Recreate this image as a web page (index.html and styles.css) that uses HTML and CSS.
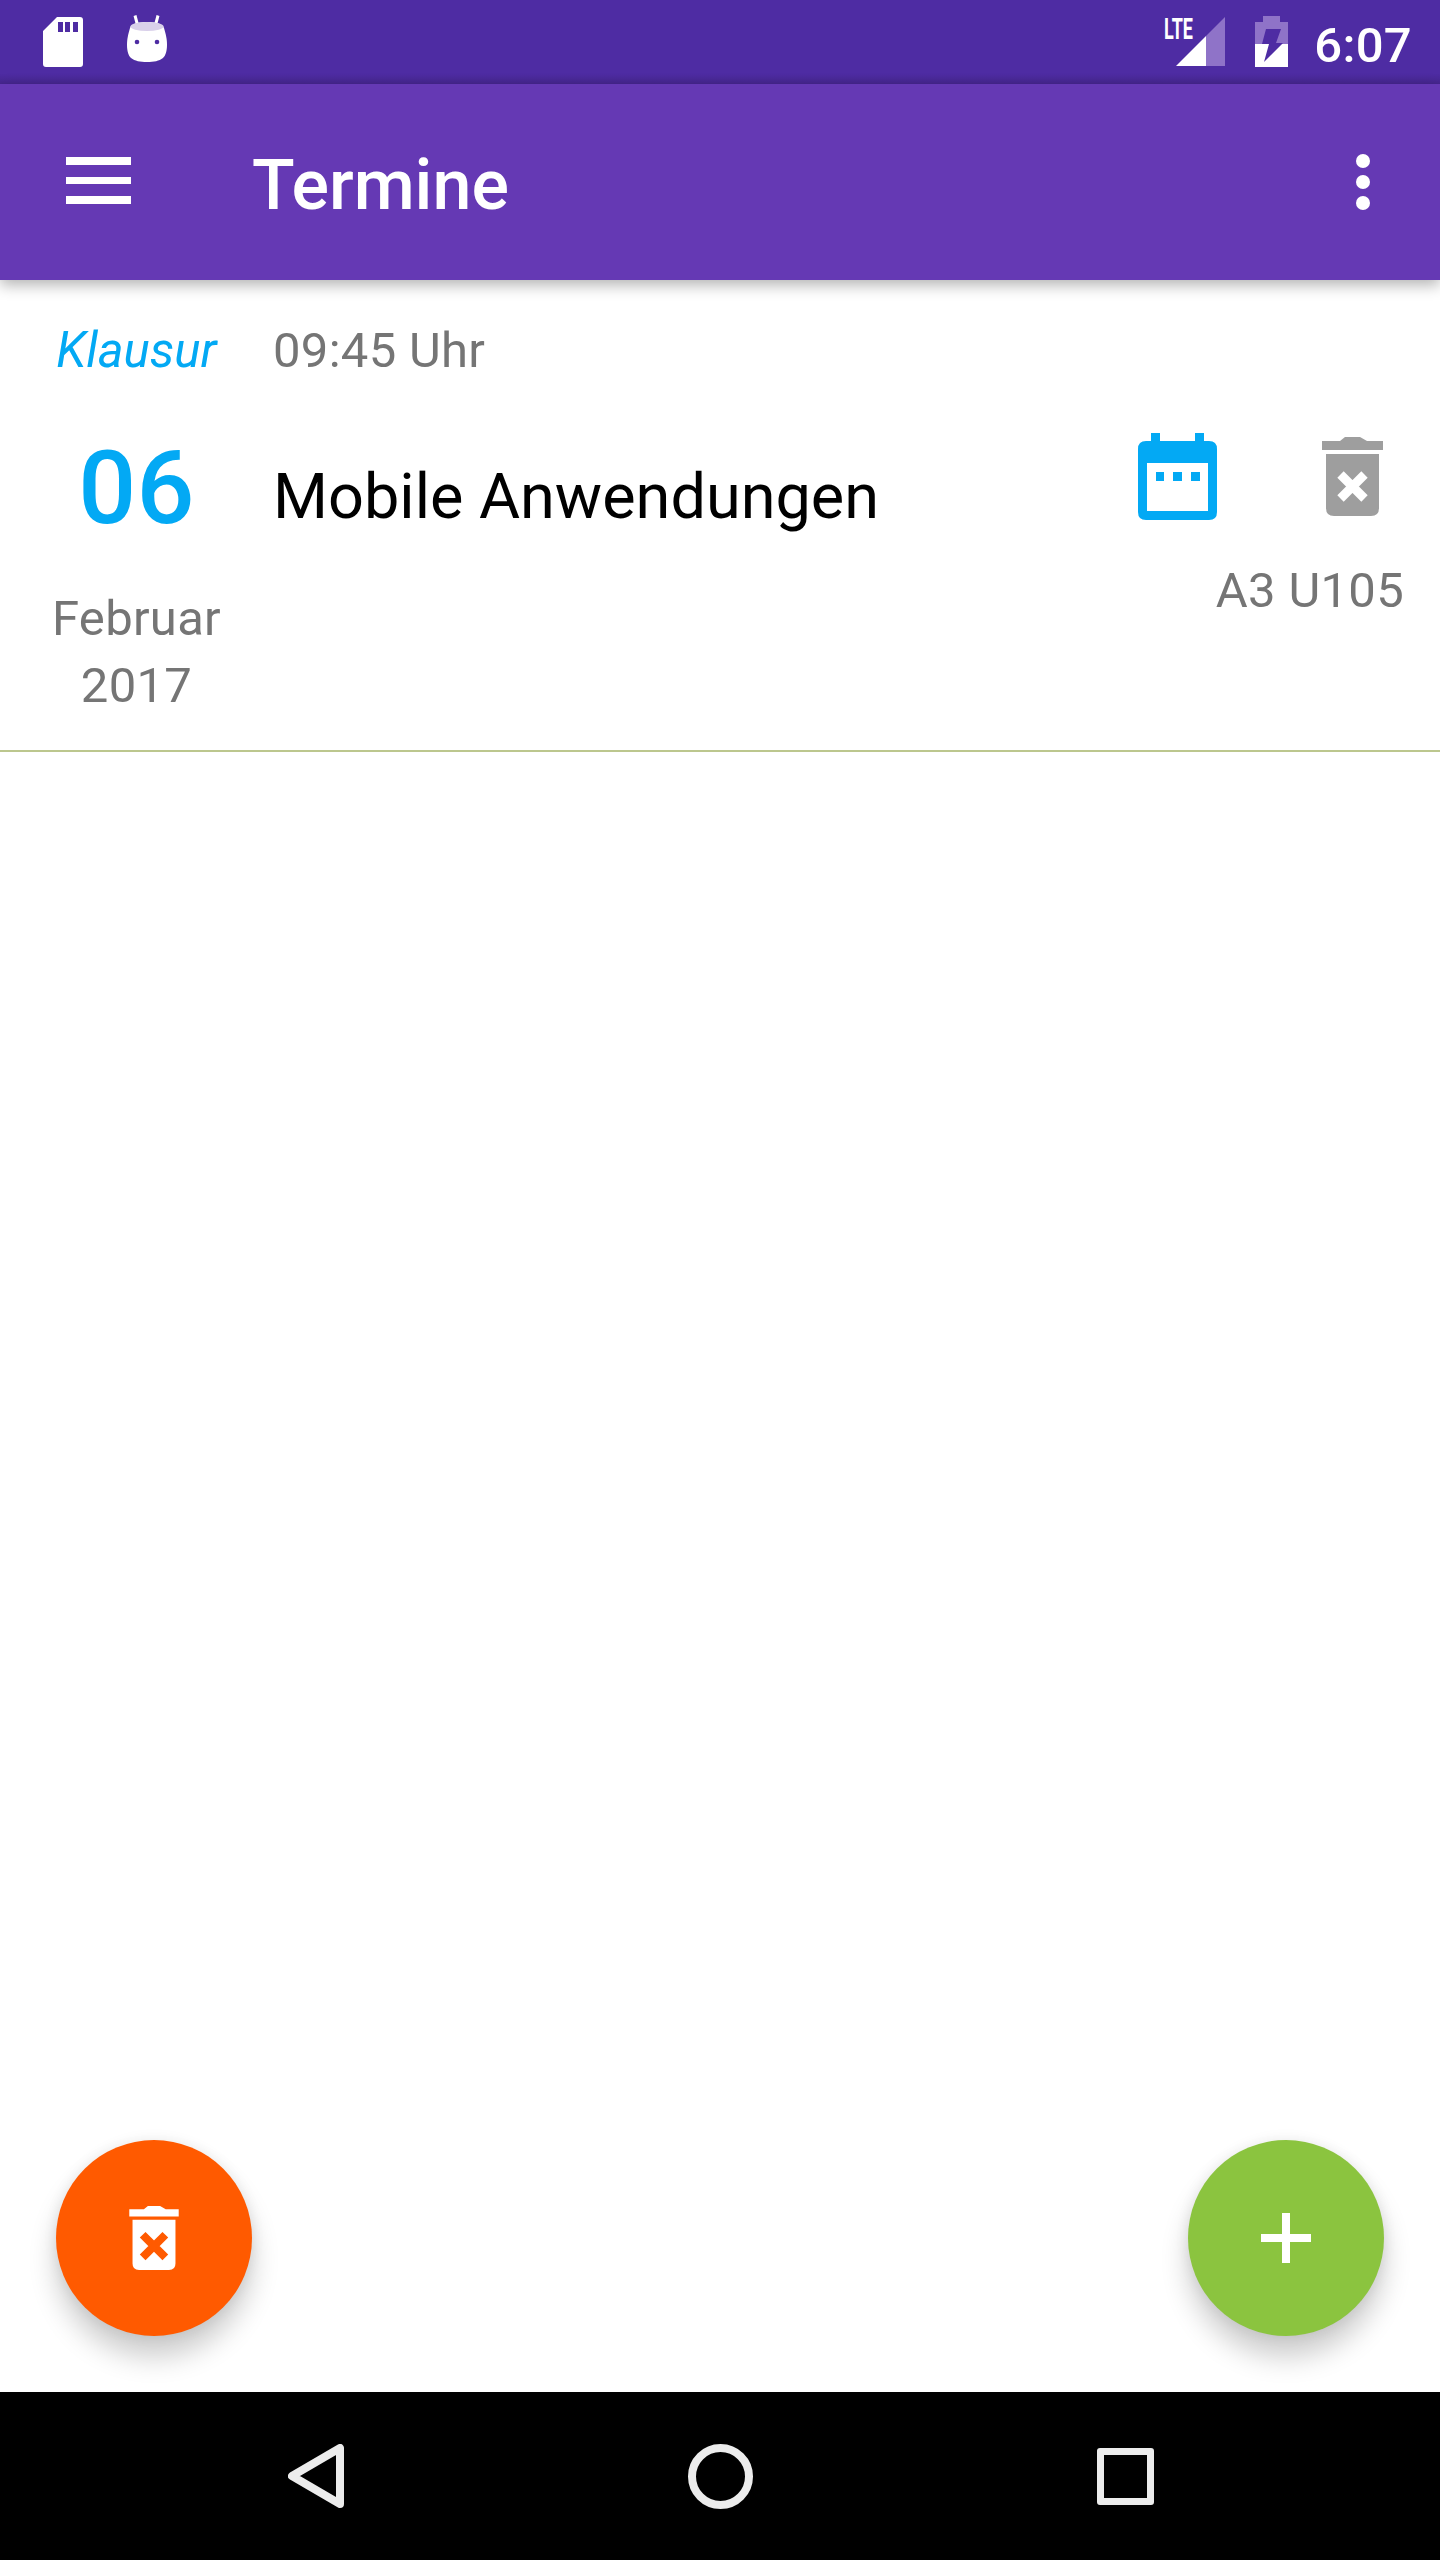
FILE: index.html
```html
<!DOCTYPE html>
<html lang="de">
<head>
    <meta charset="UTF-8">
    <meta name="viewport" content="width=device-width, initial-scale=1.0">
    <title>Termine</title>
    <link rel="stylesheet" href="styles.css">
</head>
<body>
    <div class="screen">
        <div class="statusbar">
            <svg class="sd-icon" width="40" height="50" viewBox="0 0 40 50">
                <path fill="#fff" fill-rule="evenodd" d="M14 0H37Q40 0 40 3V47Q40 50 37 50H3Q0 50 0 47V14ZM15 5V15H20V5ZM22 5V15H27V5ZM30 5V15H35V5Z"/>
            </svg>
            <svg class="android-icon" width="40" height="47" viewBox="0 0 40 47">
                <path d="M8 0.5L10.5 10M31 0.5L28.5 10" stroke="#fff" stroke-width="3" fill="none"/>
                <path fill="#fff" d="M20 7C29 7 36 9 37 13C39 20 40 24 40 30C40 36 38.5 41 36 43C32 46 27 47 20 47C13 47 8 46 4 43C1.5 41 0 36 0 30C0 24 1 20 3 13C4 9 11 7 20 7Z"/>
                <ellipse cx="20" cy="11.5" rx="16.5" ry="4.5" fill="#d9d0ea"/>
                <circle cx="10" cy="27" r="2.3" fill="#4e2ca3"/>
                <circle cx="30" cy="27" r="2.3" fill="#4e2ca3"/>
            </svg>
            <div class="status-right">
                <div class="signal">
                    <svg width="61" height="50" viewBox="0 0 61 50">
                        <polygon points="42,20 61,1 61,50 42,50" fill="#8f73c8"/>
                        <polygon points="12,50 42,20 42,50" fill="#fff"/>
                    </svg>
                    <span class="lte">LTE</span>
                </div>
                <svg class="battery-icon" width="33" height="51" viewBox="0 0 33 51">
                    <path fill="#8f73c8" d="M8 0H25V6H33V28H0V6H8Z"/>
                    <rect y="28" width="33" height="23" fill="#fff"/>
                    <polygon points="11,13 26,13 21,27 28,27 9,46 14,28 7,28" fill="#4e2ca3"/>
                </svg>
                <span class="clock">6:07</span>
            </div>
        </div>

        <div class="appbar">
            <svg class="menu-icon" width="65" height="47" viewBox="0 0 65 47">
                <rect width="65" height="8" fill="#fff"/>
                <rect y="20" width="65" height="7" fill="#fff"/>
                <rect y="39" width="65" height="8" fill="#fff"/>
            </svg>
            <p class="appbar-title">Termine</p>
            <svg class="more-icon" width="14" height="56" viewBox="0 0 14 56">
                <circle cx="7" cy="7" r="7" fill="#fff"/>
                <circle cx="7" cy="28" r="7" fill="#fff"/>
                <circle cx="7" cy="49" r="7" fill="#fff"/>
            </svg>
        </div>

        <div class="content">
            <div class="entry">
                <div class="entry-date">
                    <p class="entry-type">Klausur</p>
                    <p class="entry-day">06</p>
                    <p class="entry-month">Februar</p>
                    <p class="muted">2017</p>
                </div>
                <div class="entry-main">
                    <p class="muted">09:45 Uhr</p>
                    <p class="entry-name">Mobile Anwendungen</p>
                </div>
                <div class="entry-side">
                    <div class="entry-actions">
                        <svg width="79" height="87" viewBox="0 0 79 87">
                            <path fill="#03a9f4" fill-rule="evenodd" d="M13 0H22V8H57V0H66V8H71Q79 8 79 16V79Q79 87 71 87H8Q0 87 0 79V16Q0 8 8 8H13ZM9 30V78H70V30ZM18 39V48H26V39ZM35 39V48H44V39ZM53 39V48H62V39Z"/>
                        </svg>
                        <svg class="trash-small" width="61" height="79" viewBox="0 0 61 79">
                            <path fill="#9e9e9e" d="M0 4H18L23 0H38L45 4H61V13H0ZM4 17H57V71Q57 79 49 79H12Q4 79 4 71Z"/>
                            <path d="M18.500 37.500L42.500 61.500M42.500 37.500L18.500 61.500" stroke="#fff" stroke-width="9" fill="none"/>
                        </svg>
                    </div>
                    <p class="entry-room">A3 U105</p>
                </div>
            </div>

            <button class="fab fab-delete">
                <svg width="50" height="64" viewBox="0 0 61 79">
                    <path fill="#fff" d="M0 4H18L23 0H38L45 4H61V13H0ZM4 17H57V71Q57 79 49 79H12Q4 79 4 71Z"/>
                    <path d="M16.500 35.500L44.500 63.500M44.500 35.500L16.500 63.500" stroke="#ff5a00" stroke-width="10" fill="none"/>
                </svg>
            </button>
            <button class="fab fab-add">
                <svg width="50" height="50" viewBox="0 0 50 50">
                    <path fill="#fff" d="M21 0H29V21H50V29H29V50H21V29H0V21H21Z"/>
                </svg>
            </button>
        </div>

        <div class="navbar">
            <svg width="56" height="64" viewBox="0 0 56 64">
                <path d="M52 4V60L4 32Z" fill="none" stroke="#ececec" stroke-width="8" stroke-linejoin="round"/>
            </svg>
            <div class="nav-home"></div>
            <div class="nav-recents"></div>
        </div>
    </div>
</body>
</html>
```

FILE: styles.css
```css
body {
    font-family: Roboto, 'Noto Sans', sans-serif;
    font-size: 49px;
    line-height: 67px;
    letter-spacing: 0.3px;
    background-color: #fff;
    margin: 0;
}
p {
    margin: 0;
}
svg {
    display: block;
    flex-shrink: 0;
}
.screen {
    display: flex;
    flex-direction: column;
    height: 100vh;
}

/* status bar */
.statusbar {
    display: flex;
    align-items: flex-start;
    box-sizing: border-box;
    height: 84px;
    padding: 16px 28px 0 43px;
    background: linear-gradient(#4e2ca3 88%, #46268f);
}
.sd-icon {
    margin-top: 1px;
}
.android-icon {
    margin: -1px 0 0 44px;
}
.status-right {
    display: flex;
    margin-left: auto;
}
.signal {
    position: relative;
    margin-right: 30px;
}
.lte {
    position: absolute;
    top: 0;
    left: 0;
    color: #fff;
    font-size: 29px;
    font-weight: bold;
    line-height: 26px;
    letter-spacing: 0;
    transform: scaleX(0.62);
    transform-origin: left;
}
.battery-icon {
    margin-right: 26px;
}
.clock {
    color: #fff;
    font-weight: 500;
    line-height: 57px;
    margin-top: 1px;
}

/* app bar */
.appbar {
    display: flex;
    align-items: center;
    flex-shrink: 0;
    height: 196px;
    padding: 0 70px 0 66px;
    background-color: #6539b4;
    box-shadow: 0 5px 14px rgba(0, 0, 0, 0.3);
    position: relative;
}
.menu-icon {
    margin-top: -3px;
}
.appbar-title {
    color: #fff;
    font-size: 70px;
    font-weight: 500;
    line-height: 82px;
    letter-spacing: 0;
    margin-left: 121px;
    padding-top: 6px;
}
.more-icon {
    margin-left: auto;
}

/* entry row */
.content {
    flex: 1;
    position: relative;
}
.entry {
    display: flex;
    height: 472px;
    box-sizing: border-box;
    border-bottom: 2px solid #bcc78e;
}
.entry-date {
    width: 273px;
    padding-top: 37px;
    text-align: center;
}
.entry-type {
    color: #03a9f4;
    font-style: italic;
    letter-spacing: 0;
}
.entry-day {
    color: #03a9f4;
    font-size: 102px;
    font-weight: 500;
    line-height: 110px;
    margin-top: 49px;
}
.entry-month {
    color: #757575;
    margin-top: 42px;
}
.muted {
    color: #757575;
}
.entry-main {
    padding-top: 37px;
}
.entry-name {
    color: #000;
    font-size: 63px;
    line-height: 74px;
    margin-top: 76px;
    letter-spacing: 0;
}
.entry-side {
    display: flex;
    flex-direction: column;
    align-items: flex-end;
    margin-left: auto;
    padding: 153px 36px 0 0;
}
.entry-actions {
    display: flex;
    gap: 105px;
    margin-right: 21px;
}
.trash-small {
    margin-top: 4px;
}
.entry-room {
    color: #757575;
    margin-top: 37px;
}

/* floating buttons */
.fab {
    position: absolute;
    bottom: 56px;
    display: flex;
    align-items: center;
    justify-content: center;
    width: 196px;
    height: 196px;
    padding: 0;
    border: none;
    border-radius: 50%;
    box-shadow: 0 21px 28px rgba(0, 0, 0, 0.2), 0 0 14px rgba(0, 0, 0, 0.08);
}
.fab-delete {
    left: 56px;
    background-color: #ff5a00;
}
.fab-add {
    right: 56px;
    background-color: #8bc43f;
}

/* navigation bar */
.navbar {
    display: flex;
    align-items: center;
    gap: 344px;
    flex-shrink: 0;
    height: 168px;
    padding-left: 288px;
    background-color: #000;
}
.nav-home {
    width: 65px;
    height: 65px;
    box-sizing: border-box;
    border: 8px solid #ececec;
    border-radius: 50%;
}
.nav-recents {
    width: 57px;
    height: 57px;
    box-sizing: border-box;
    border: 7px solid #ececec;
    border-radius: 3px;
}
```
